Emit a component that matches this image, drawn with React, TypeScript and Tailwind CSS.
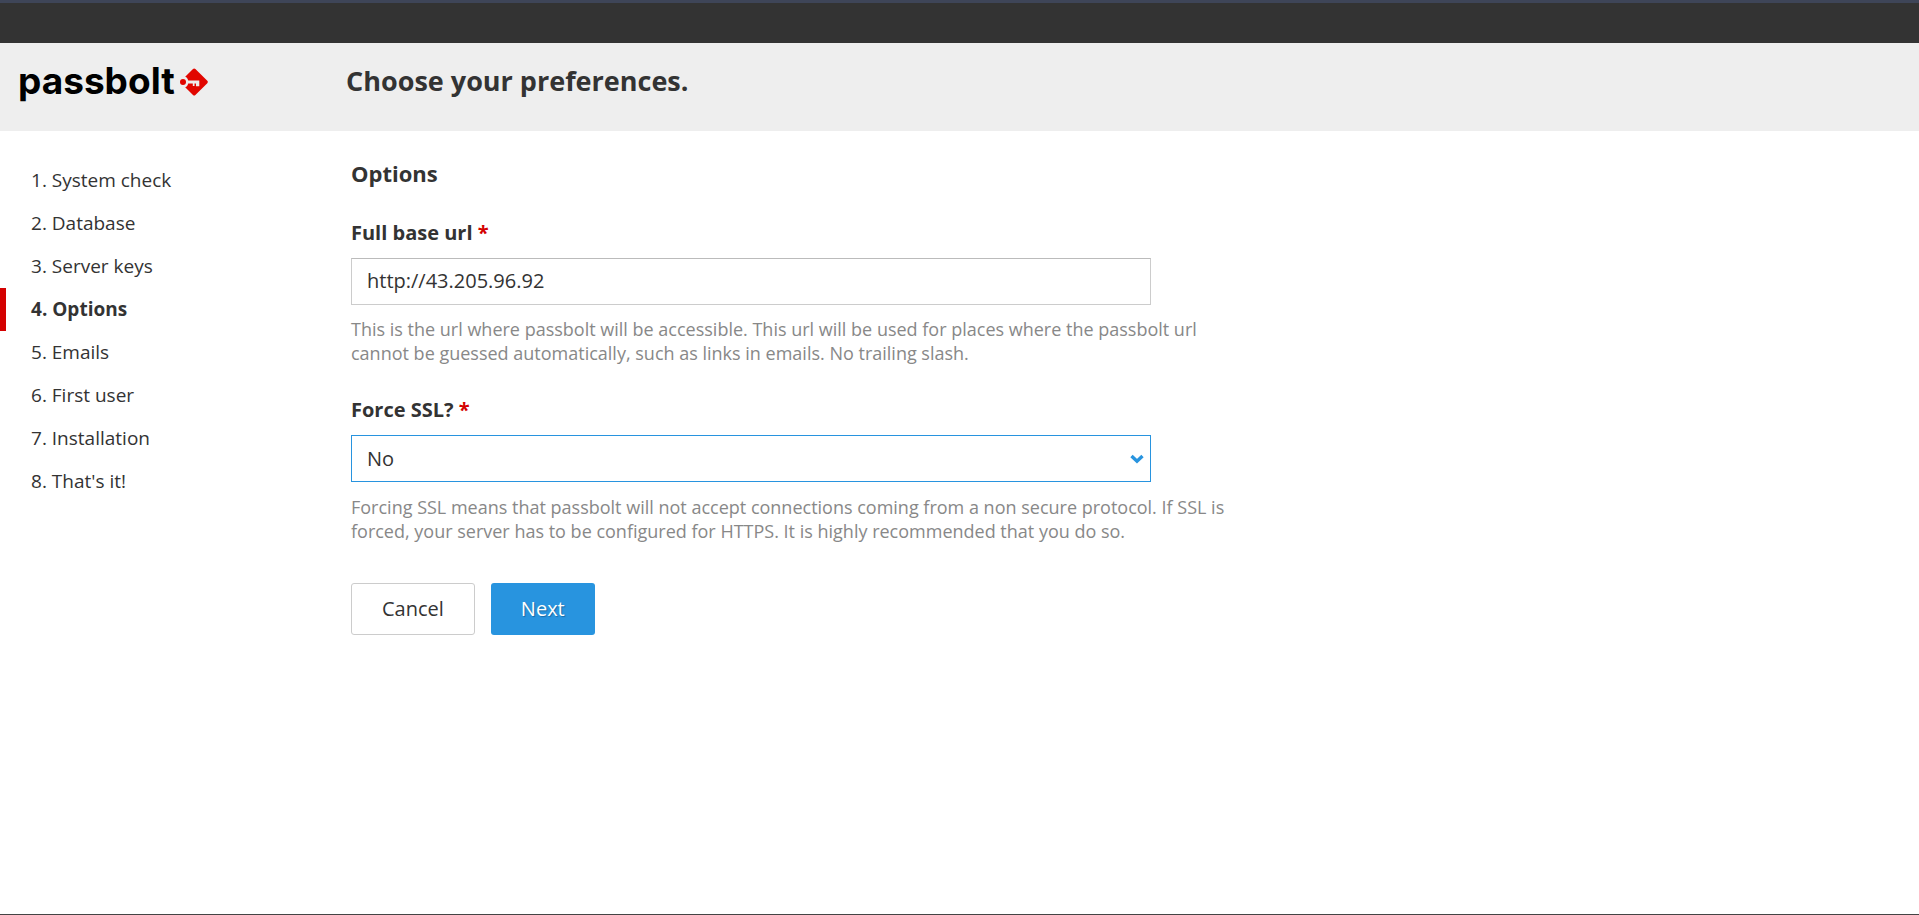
import React, { useState } from "react";

const steps = [
  "System check",
  "Database",
  "Server keys",
  "Options",
  "Emails",
  "First user",
  "Installation",
  "That's it!",
];
const currentStep = 3;

function Logo() {
  return (
    <a href="#home" className="flex items-center gap-[5px] text-black">
      <span className="font-['Inter',sans-serif] text-[37px] leading-[44px] font-bold">passbolt</span>
      <svg viewBox="0 0 28 28" className="mt-px size-7" aria-hidden="true">
        <circle cx="3" cy="14" r="3" fill="#e10600" />
        <path
          fill="#e10600"
          d="M13 1c.7-.7 1.700-.7 2.400 0l11.900 11.800c.7.7.7 1.700 0 2.400L15.400 27c-.7.7-1.700.7-2.400 0L5.200 19.300c1.500-.6 2.600-1.900 3-3.900h4.600v2.600h1.700v-2.600h1.500v2.900h3.300v-5.900H8.200C7.700 10.500 6.700 9.300 5.200 8.700z"
        />
      </svg>
    </a>
  );
}

function Required() {
  return <span className="text-[#d40101]">*</span>;
}

export default function App() {
  const [url, setUrl] = useState("http://43.205.96.92");
  const [ssl, setSsl] = useState("No");

  return (
    <div className="flex min-h-screen flex-col border-b border-[#444] bg-white font-['Open_Sans','Noto_Sans',sans-serif] text-[#333]">
      <div className="h-[43px] border-t-3 border-[#3e4558] bg-[#333]" />
      <header className="flex h-[88px] items-start bg-[#eee]">
        <div className="w-[346px] shrink-0 pt-4 pl-[18px]">
          <Logo />
        </div>
        <h1 className="pt-[18px] text-[27px] leading-10 font-bold">Choose your preferences.</h1>
      </header>

      <div className="flex flex-1">
        <nav className="w-[351px] shrink-0 pt-7" aria-label="Setup steps">
          <ol>
            {steps.map((step, i) => (
              <li key={step}>
                <a
                  href={"#step-" + (i + 1)}
                  aria-current={i === currentStep ? "step" : undefined}
                  className={
                    i === currentStep
                      ? "block border-l-6 border-[#d40101] pl-[25px] text-[19px] leading-[43px] font-bold"
                      : "block border-l-6 border-transparent pl-[25px] text-[19px] leading-[43px]"
                  }
                >
                  {i + 1}. {step}
                </a>
              </li>
            ))}
          </ol>
        </nav>

        <main className="max-w-[880px] flex-1 pt-[26px]">
          <h2 className="text-[22px] leading-8 font-bold">Options</h2>
          <form onSubmit={(e) => e.preventDefault()}>
            <div className="pt-[30px]">
              <label htmlFor="url" className="block text-xl leading-7 font-bold">
                Full base url <Required />
              </label>
              <input
                id="url"
                type="text"
                required
                value={url}
                onChange={(e) => setUrl(e.target.value)}
                className="mt-[11px] block h-[47px] w-full max-w-[800px] border border-[#ccc] border-t-[#bbb] bg-white px-[15px] pb-[2px] text-xl outline-none"
              />
              <p className="mt-3 text-lg leading-6 text-[#888]">
                This is the url where passbolt will be accessible. This url will be used for places where the passbolt url
                <br />
                cannot be guessed automatically, such as links in emails. No trailing slash.
              </p>
            </div>

            <div className="pt-[31px]">
              <label htmlFor="ssl" className="block text-xl leading-7 font-bold">
                Force SSL? <Required />
              </label>
              <div className="relative mt-[11px] max-w-[800px]">
                <select
                  id="ssl"
                  required
                  value={ssl}
                  onChange={(e) => setSsl(e.target.value)}
                  className="block h-[47px] w-full appearance-none border border-[#2894df] bg-white px-[15px] text-xl outline-none"
                >
                  <option>No</option>
                  <option>Yes</option>
                </select>
                <svg
                  viewBox="0 0 14 10"
                  className="pointer-events-none absolute top-[19px] right-[7px] h-[10px] w-[14px]"
                  fill="none"
                  stroke="#2894df"
                  strokeWidth="3.4"
                  aria-hidden="true"
                >
                  <path d="M1.500 2 7 7.200 12.500 2" />
                </svg>
              </div>
              <p className="mt-[13px] text-lg leading-6 text-[#888]">
                Forcing SSL means that passbolt will not accept connections coming from a non secure protocol. If SSL is
                <br />
                forced, your server has to be configured for HTTPS. It is highly recommended that you do so.
              </p>
            </div>

            <div className="flex gap-4 pt-10">
              <button type="button" className="h-[52px] rounded-[3px] border border-[#ccc] bg-white px-[30px] text-xl">
                Cancel
              </button>
              <button
                type="submit"
                className="h-[52px] rounded-[3px] bg-[#2894df] px-[30px] text-xl text-white [text-shadow:1px_1px_1px_#1a6ba5]"
              >
                Next
              </button>
            </div>
          </form>
        </main>
      </div>
    </div>
  );
}
